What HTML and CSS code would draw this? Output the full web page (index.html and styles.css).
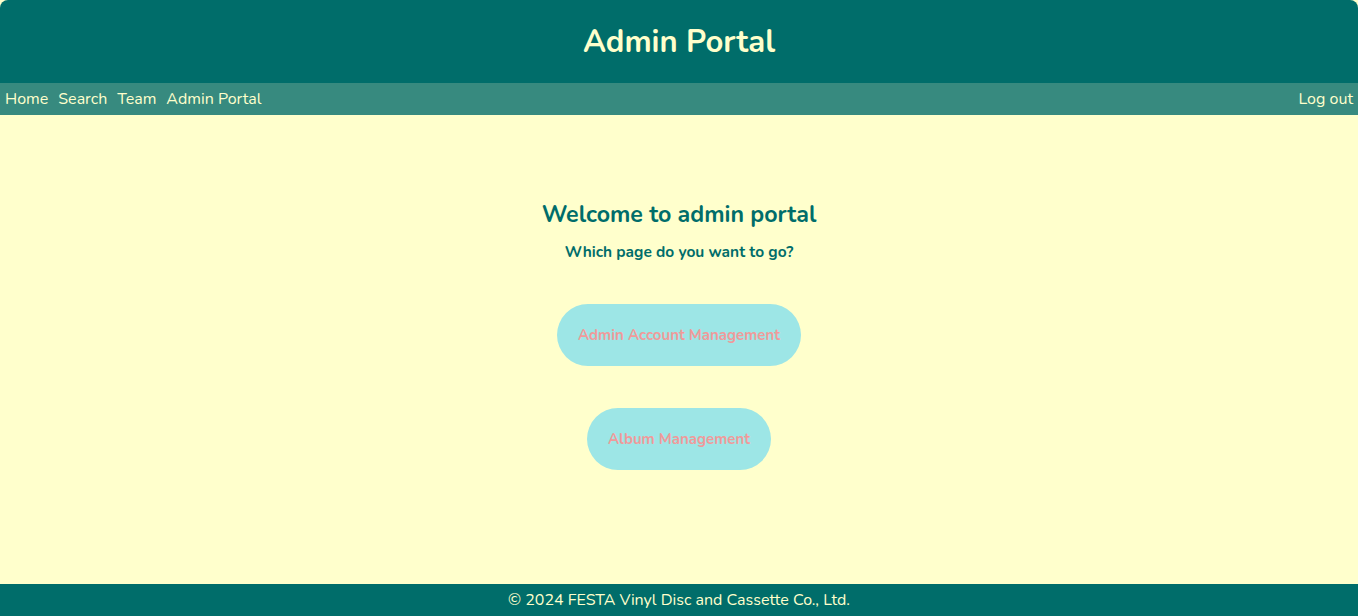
FILE: index.html
```html
<!DOCTYPE html>
<html lang="en">
<head>
<meta charset="utf-8">
<title>Admin Portal</title>
<link rel="stylesheet" href="styles.css">
</head>
<body>
<div class="page">
  <header class="header">
    <h1 class="title">Admin Portal</h1>
  </header>
  <nav class="nav">
    <div class="nav-left">
      <a class="nav-link" href="#">Home</a>
      <a class="nav-link" href="#">Search</a>
      <a class="nav-link" href="#">Team</a>
      <a class="nav-link" href="#">Admin Portal</a>
    </div>
    <a class="nav-link" href="#">Log out</a>
  </nav>
  <main class="main">
    <h2 class="welcome">Welcome to admin portal</h2>
    <p class="question">Which page do you want to go?</p>
    <div class="actions">
      <a class="btn" href="#">Admin Account Management</a>
      <a class="btn" href="#">Album Management</a>
    </div>
  </main>
  <footer class="footer">© 2024 FESTA Vinyl Disc and Cassette Co., Ltd.</footer>
</div>
</body>
</html>
```
FILE: styles.css
```css
* { box-sizing: border-box; }
html, body { margin: 0; padding: 0; }
body {
  background: #ffffcc;
  font-family: "Nunito", "Open Sans", "Noto Sans", sans-serif;
  color: #006d6a;
}
.page {
  min-height: 100vh;
  display: flex;
  flex-direction: column;
}
.header {
  height: 83px;
  background: #006d6a;
  border-radius: 8px 8px 0 0;
  display: flex;
  align-items: center;
  justify-content: center;
}
.title {
  margin: 0;
  color: #ffffcc;
  font-size: 31px;
  font-weight: 700;
}
.nav {
  height: 32px;
  background: #378a7f;
  display: flex;
  align-items: center;
  justify-content: space-between;
  padding: 0 5px;
}
.nav-left { display: flex; gap: 10px; }
.nav-link {
  color: #ffffcc;
  text-decoration: none;
  font-size: 16px;
}
.main {
  flex: 1;
  display: flex;
  flex-direction: column;
  align-items: center;
  padding-top: 85px;
}
.welcome {
  margin: 0;
  font-size: 23.2px;
  font-weight: 700;
  line-height: 30px;
}
.question {
  margin: 12px 0 0;
  font-size: 15.5px;
  font-weight: 700;
  line-height: 20px;
}
.actions {
  margin-top: 42px;
  display: flex;
  flex-direction: column;
  align-items: center;
  gap: 42px;
}
.btn {
  height: 62px;
  padding: 0 21px;
  border-radius: 31px;
  background: #9de6e6;
  color: #f09a9a;
  font-size: 15px;
  font-weight: 700;
  text-decoration: none;
  display: flex;
  align-items: center;
}
.footer {
  height: 32px;
  background: #006d6a;
  color: #ffffcc;
  font-size: 16px;
  display: flex;
  align-items: center;
  justify-content: center;
}
```
